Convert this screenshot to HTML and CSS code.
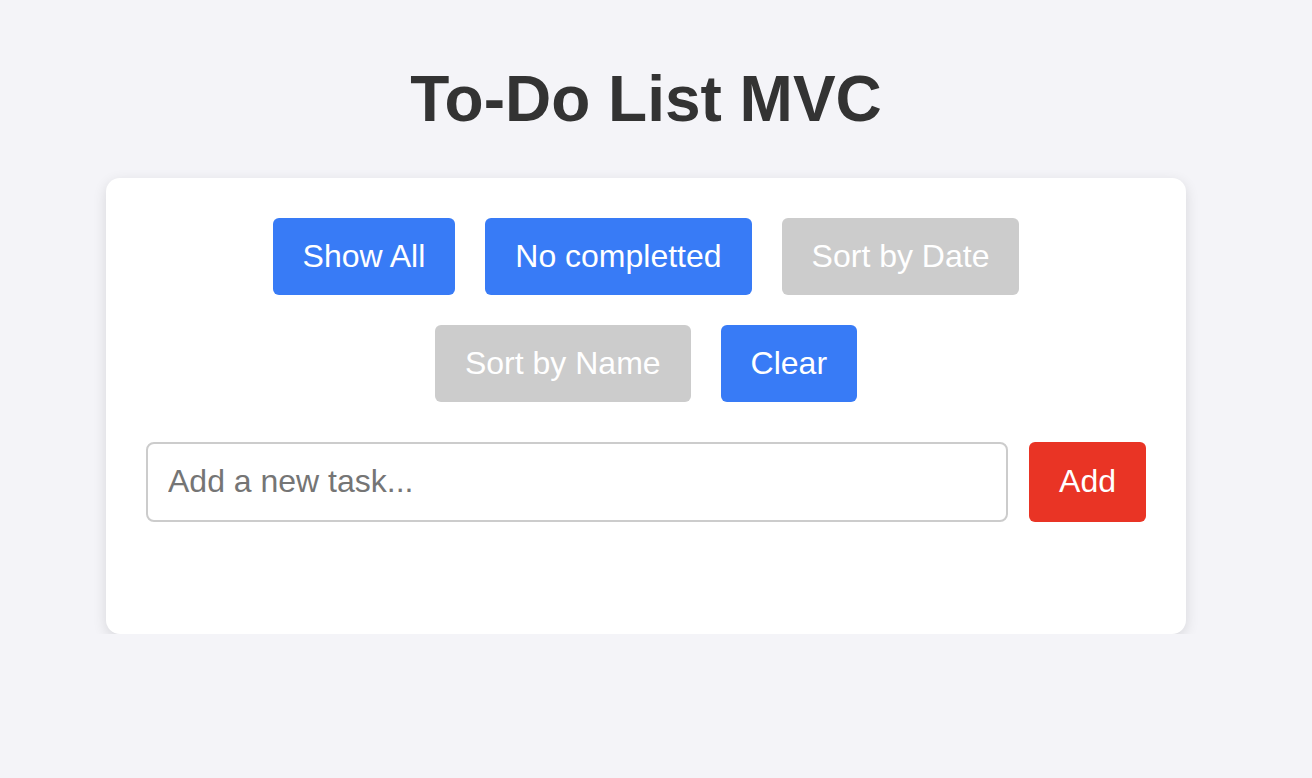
FILE: index.html
```html
<!DOCTYPE html>
<html lang="en">
<head>
<meta charset="utf-8">
<title>To-Do List MVC</title>
<link rel="stylesheet" href="styles.css">
</head>
<body>
  <h1 class="title">To-Do List MVC</h1>
  <main class="card">
    <div class="controls">
      <button class="btn btn-blue">Show All</button>
      <button class="btn btn-blue">No completted</button>
      <button class="btn btn-grey">Sort by Date</button>
      <button class="btn btn-grey">Sort by Name</button>
      <button class="btn btn-blue">Clear</button>
    </div>
    <form class="add-form">
      <input class="task-input" type="text" placeholder="Add a new task...">
      <button type="button" class="btn btn-red">Add</button>
    </form>
    <ul class="task-list"></ul>
  </main>
</body>
</html>
```

FILE: styles.css
```css
html, body {
  margin: 0;
  padding: 0;
}

body {
  background: #f4f4f8;
  font-family: "Liberation Sans", Arial, Helvetica, sans-serif;
  color: #333333;
  padding-right: 20px;
}

.title {
  margin: 63px 0 41px;
  text-align: center;
  font-size: 64px;
  font-weight: 700;
  line-height: 1.15;
  color: #333333;
}

.card {
  width: 1000px;
  margin: 0 auto;
  padding: 40px;
  background: #ffffff;
  border-radius: 14px;
  box-shadow: 0 4px 14px rgba(0, 0, 0, 0.12);
}

.controls {
  display: flex;
  flex-wrap: wrap;
  justify-content: center;
  gap: 30px;
}

.btn {
  font-family: "Liberation Sans", Arial, Helvetica, sans-serif;
  font-size: 32px;
  line-height: 37px;
  height: 77px;
  padding: 20px 30px;
  border: none;
  border-radius: 6px;
  color: #ffffff;
  cursor: pointer;
  box-sizing: border-box;
}

.btn-blue {
  background: #387bf6;
}

.btn-grey {
  background: #cccccc;
}

.btn-red {
  background: #e93425;
  height: 80px;
  padding: 21px 30px;
}

.add-form {
  display: flex;
  gap: 21px;
  margin-top: 40px;
}

.task-input {
  flex: 1;
  height: 80px;
  box-sizing: border-box;
  padding: 0 20px;
  border: 2px solid #cccccc;
  border-radius: 8px;
  font-family: "Liberation Sans", Arial, Helvetica, sans-serif;
  font-size: 32px;
  color: #333333;
  outline: none;
}

.task-input::placeholder {
  color: #757575;
}

.task-list {
  list-style: none;
  margin: 40px 0 0;
  padding: 0;
  min-height: 32px;
}
```
